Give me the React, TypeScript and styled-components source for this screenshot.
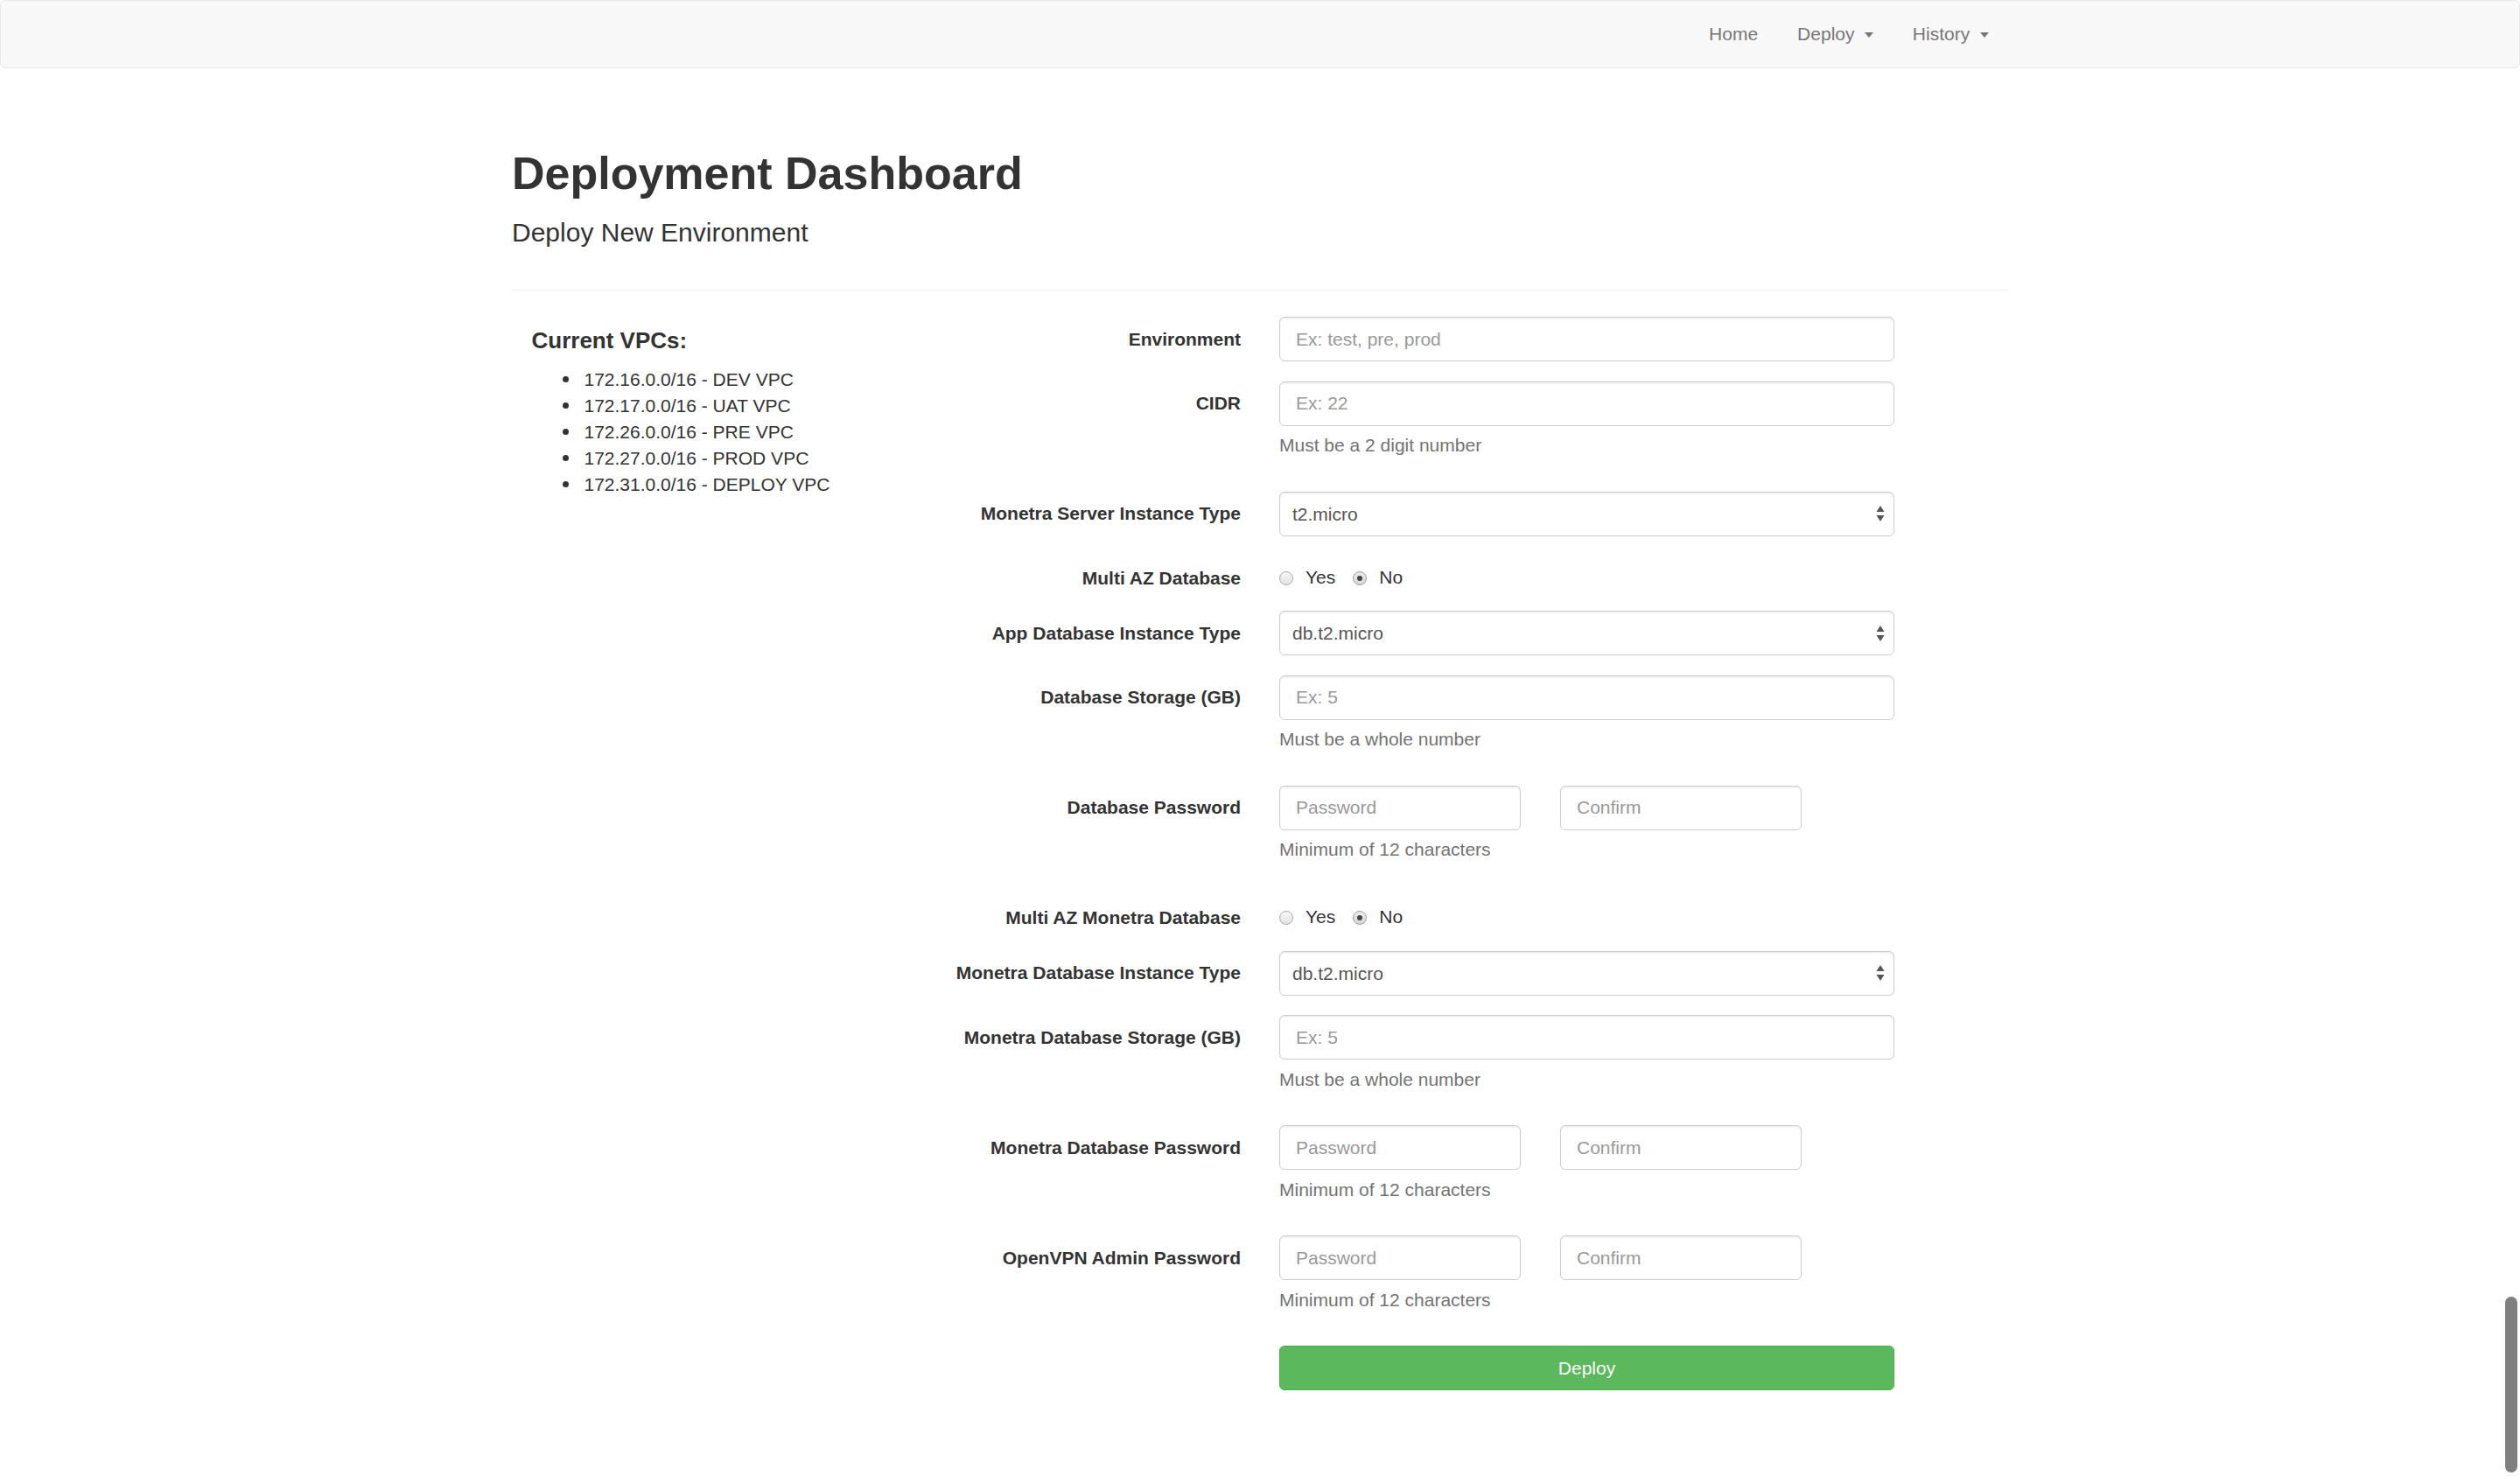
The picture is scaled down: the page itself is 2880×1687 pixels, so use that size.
import React from 'react';
import styled, { createGlobalStyle } from 'styled-components';

const GlobalStyle = createGlobalStyle`
  * { box-sizing: border-box; }
  html, body { margin: 0; padding: 0; background: #fff; }
  body {
    font-family: "Liberation Sans", Helvetica, Arial, sans-serif;
    font-size: 21px;
    line-height: 30px;
    color: #333;
  }
`;

const Navbar = styled.nav`
  height: 78px;
  background: #f8f8f8;
  border: 1.5px solid #e7e7e7;
  border-radius: 6px;
`;

const NavInner = styled.div`
  width: 1710px;
  margin: 0 auto;
  display: flex;
  justify-content: flex-end;
`;

const NavList = styled.ul`
  list-style: none;
  margin: 0;
  padding: 0;
  display: flex;
`;

const NavLink = styled.a`
  display: block;
  padding: 22.5px;
  line-height: 30px;
  color: #777;
  text-decoration: none;
`;

const Caret = styled.span`
  display: inline-block;
  width: 0;
  height: 0;
  margin-left: 5.5px;
  vertical-align: middle;
  border-top: 6px solid #777;
  border-left: 5px solid transparent;
  border-right: 5px solid transparent;
`;

const Container = styled.main`
  width: 1710px;
  margin: 0 auto;
`;

const PageHeader = styled.header`
  padding-top: 90.5px;
  padding-bottom: 49.5px;
  border-bottom: 1.5px solid #eee;
  margin-bottom: 30px;
`;

const Title = styled.h1`
  margin: 0;
  font-size: 52px;
  line-height: 59px;
  font-weight: 700;
  color: #333;
`;

const Subtitle = styled.p`
  margin: 21px 0 0;
  font-size: 30px;
  line-height: 33px;
  font-weight: 400;
  color: #333;
`;

const ContentRow = styled.section`
  display: flex;
  align-items: flex-start;
`;

const VpcPanel = styled.aside`
  width: 438px;
  padding-left: 22.5px;
`;

const VpcTitle = styled.h4`
  margin: 13px 0 14px;
  font-size: 26px;
  line-height: 29.7px;
  font-weight: 700;
`;

const VpcList = styled.ul`
  margin: 0;
  padding-left: 35px;
  list-style: none;
  line-height: 30px;
`;

const VpcItem = styled.li`
  display: flex;
  align-items: center;
  &::before {
    content: '';
    width: 7px;
    height: 7px;
    margin-right: 18px;
    border-radius: 50%;
    background: #333;
  }
`;

const FormPanel = styled.form`
  flex: 1;
`;

const FormRow = styled.div`
  display: grid;
  grid-template-columns: 395px 703px;
  column-gap: 44px;
  margin-bottom: 22.5px;
`;

const Label = styled.label`
  text-align: right;
  font-weight: 700;
  padding-top: 10.5px;
  line-height: 30px;
`;

const Field = styled.div`
  display: flex;
  flex-direction: column;
`;

const TextInput = styled.input<{ $half?: boolean }>`
  display: block;
  width: ${(p) => (p.$half ? '275.5px' : '100%')};
  height: 51px;
  padding: 9px 18px;
  font-family: inherit;
  font-size: 21px;
  line-height: 30px;
  color: #555;
  background: #fff;
  border: 1.5px solid #ccc;
  border-radius: 6px;
  box-shadow: inset 0 1.5px 1.5px rgba(0, 0, 0, 0.075);
  outline: none;
  &::placeholder { color: #999; }
`;

const PasswordPair = styled.div`
  display: flex;
  gap: 45.5px;
`;

const HelpText = styled.span`
  display: block;
  margin: 7.5px 0 15px;
  color: #737373;
  line-height: 30px;
`;

const SelectWrap = styled.div`
  position: relative;
  width: 100%;
`;

const Select = styled.select`
  display: block;
  width: 100%;
  height: 51px;
  padding: 0 40px 0 14px;
  font-family: inherit;
  font-size: 21px;
  color: #555;
  background: #fff;
  border: 1.5px solid #ccc;
  border-radius: 6px;
  box-shadow: inset 0 1.5px 1.5px rgba(0, 0, 0, 0.075);
  appearance: none;
  -webkit-appearance: none;
  outline: none;
`;

const SelectArrows = styled.svg`
  position: absolute;
  right: 11px;
  top: 50%;
  transform: translateY(-50%);
  pointer-events: none;
`;

const RadioGroup = styled.div`
  display: flex;
  align-items: center;
  padding-top: 9px;
  min-height: 40.5px;
  line-height: 30px;
  gap: 20px;
`;

const RadioLabel = styled.label`
  display: flex;
  align-items: center;
  color: #333;
`;

const RadioInput = styled.input.attrs({ type: 'radio' })`
  appearance: none;
  -webkit-appearance: none;
  width: 16px;
  height: 16px;
  margin: 2px 14px 0 0;
  border-radius: 50%;
  border: 1px solid #acacac;
  background: linear-gradient(#f7f7f7, #e2e2e2);
  display: grid;
  place-content: center;
  &:checked {
    background: linear-gradient(#ececec, #d6d6d6);
    border-color: #9c9c9c;
  }
  &:checked::before {
    content: '';
    width: 6px;
    height: 6px;
    border-radius: 50%;
    background: #444;
  }
`;

const DeployButton = styled.button`
  display: block;
  width: 100%;
  height: 51px;
  font-family: inherit;
  font-size: 21px;
  color: #fff;
  background: #5cb85c;
  border: 1.5px solid #4cae4c;
  border-radius: 6px;
  cursor: pointer;
`;

const ScrollThumb = styled.div`
  position: fixed;
  right: 3px;
  bottom: 4px;
  width: 14px;
  height: 201px;
  border-radius: 7px;
  background: #7f7f7f;
`;

const vpcs = [
  '172.16.0.0/16 - DEV VPC',
  '172.17.0.0/16 - UAT VPC',
  '172.26.0.0/16 - PRE VPC',
  '172.27.0.0/16 - PROD VPC',
  '172.31.0.0/16 - DEPLOY VPC',
];

const Arrows = () => (
  <SelectArrows width="10" height="20" viewBox="0 0 10 20">
    <polygon points="5,1 9.5,8 0.5,8" fill="#555" />
    <polygon points="0.5,12 9.5,12 5,19" fill="#555" />
  </SelectArrows>
);

const SelectField = ({ id, value }: { id: string; value: string }) => (
  <SelectWrap>
    <Select id={id} defaultValue={value}>
      <option value={value}>{value}</option>
    </Select>
    <Arrows />
  </SelectWrap>
);

const RadioField = ({ name }: { name: string }) => (
  <RadioGroup>
    <RadioLabel>
      <RadioInput name={name} value="yes" />
      Yes
    </RadioLabel>
    <RadioLabel>
      <RadioInput name={name} value="no" defaultChecked />
      No
    </RadioLabel>
  </RadioGroup>
);

const PasswordField = () => (
  <Field>
    <PasswordPair>
      <TextInput $half type="password" placeholder="Password" />
      <TextInput $half type="password" placeholder="Confirm" />
    </PasswordPair>
    <HelpText>Minimum of 12 characters</HelpText>
  </Field>
);

export default function App() {
  return (
    <>
      <GlobalStyle />
      <Navbar>
        <NavInner>
          <NavList>
            <li><NavLink href="#">Home</NavLink></li>
            <li><NavLink href="#">Deploy <Caret /></NavLink></li>
            <li><NavLink href="#">History <Caret /></NavLink></li>
          </NavList>
        </NavInner>
      </Navbar>
      <Container>
        <PageHeader>
          <Title>Deployment Dashboard</Title>
          <Subtitle>Deploy New Environment</Subtitle>
        </PageHeader>
        <ContentRow>
          <VpcPanel>
            <VpcTitle>Current VPCs:</VpcTitle>
            <VpcList>
              {vpcs.map((v) => (
                <VpcItem key={v}>{v}</VpcItem>
              ))}
            </VpcList>
          </VpcPanel>
          <FormPanel onSubmit={(e) => e.preventDefault()}>
            <FormRow>
              <Label htmlFor="env">Environment</Label>
              <TextInput id="env" placeholder="Ex: test, pre, prod" />
            </FormRow>
            <FormRow>
              <Label htmlFor="cidr">CIDR</Label>
              <Field>
                <TextInput id="cidr" placeholder="Ex: 22" />
                <HelpText>Must be a 2 digit number</HelpText>
              </Field>
            </FormRow>
            <FormRow>
              <Label htmlFor="srv">Monetra Server Instance Type</Label>
              <SelectField id="srv" value="t2.micro" />
            </FormRow>
            <FormRow>
              <Label>Multi AZ Database</Label>
              <RadioField name="multiaz" />
            </FormRow>
            <FormRow>
              <Label htmlFor="appdb">App Database Instance Type</Label>
              <SelectField id="appdb" value="db.t2.micro" />
            </FormRow>
            <FormRow>
              <Label htmlFor="storage">Database Storage (GB)</Label>
              <Field>
                <TextInput id="storage" placeholder="Ex: 5" />
                <HelpText>Must be a whole number</HelpText>
              </Field>
            </FormRow>
            <FormRow>
              <Label>Database Password</Label>
              <PasswordField />
            </FormRow>
            <FormRow>
              <Label>Multi AZ Monetra Database</Label>
              <RadioField name="multiazmonetra" />
            </FormRow>
            <FormRow>
              <Label htmlFor="mdb">Monetra Database Instance Type</Label>
              <SelectField id="mdb" value="db.t2.micro" />
            </FormRow>
            <FormRow>
              <Label htmlFor="mstorage">Monetra Database Storage (GB)</Label>
              <Field>
                <TextInput id="mstorage" placeholder="Ex: 5" />
                <HelpText>Must be a whole number</HelpText>
              </Field>
            </FormRow>
            <FormRow>
              <Label>Monetra Database Password</Label>
              <PasswordField />
            </FormRow>
            <FormRow>
              <Label>OpenVPN Admin Password</Label>
              <PasswordField />
            </FormRow>
            <FormRow>
              <span />
              <DeployButton type="submit">Deploy</DeployButton>
            </FormRow>
          </FormPanel>
        </ContentRow>
      </Container>
      <ScrollThumb />
    </>
  );
}
